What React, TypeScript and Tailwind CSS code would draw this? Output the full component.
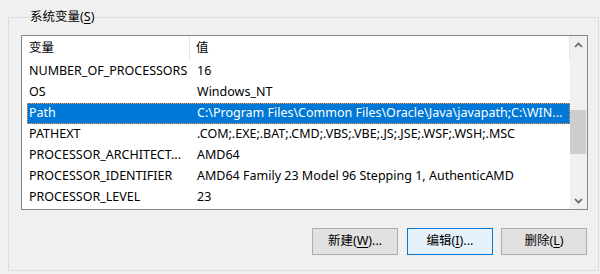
import React from 'react';

interface EnvVar {
  name: string;
  value: string;
}

// shown as the list view clips them
const vars: EnvVar[] = [
  { name: 'NUMBER_OF_PROCESSORS', value: '16' },
  { name: 'OS', value: 'Windows_NT' },
  { name: 'Path', value: 'C:\\Program Files\\Common Files\\Oracle\\Java\\javapath;C:\\WIN...' },
  { name: 'PATHEXT', value: '.COM;.EXE;.BAT;.CMD;.VBS;.VBE;.JS;.JSE;.WSF;.WSH;.MSC' },
  { name: 'PROCESSOR_ARCHITECT...', value: 'AMD64' },
  { name: 'PROCESSOR_IDENTIFIER', value: 'AMD64 Family 23 Model 96 Stepping 1, AuthenticAMD' },
  { name: 'PROCESSOR_LEVEL', value: '23' },
];

const selectedName = 'Path';

const Chevron: React.FC<{ up?: boolean }> = ({ up }) => (
  <svg width="9" height="6" viewBox="0 0 9 6" className="block">
    <path
      d={up ? 'M1 5 L4.5 1.5 L8 5' : 'M1 1 L4.5 4.5 L8 1'}
      fill="none"
      stroke="#606060"
      strokeWidth="1.6"
    />
  </svg>
);

const WinButton: React.FC<{ label: string; hotkey: string; dots?: boolean; focused?: boolean; className?: string }> = ({
  label,
  hotkey,
  dots,
  focused,
  className = '',
}) => (
  <button
    className={`w-[86px] h-[27px] flex items-center justify-center text-[12.5px] text-black border ${
      focused ? 'bg-[#e5f1fb] border-[#0078d7]' : 'bg-[#e1e1e1] border-[#adadad]'
    } ${className}`}
  >
    {label}(<span className="underline underline-offset-2">{hotkey}</span>){dots ? '...' : ''}
  </button>
);

export default function App() {
  return (
    <div
      className="w-[600px] h-[274px] bg-[#f0f0f0] overflow-hidden pt-[9px] text-black"
      style={{ fontFamily: '"Noto Sans", "Noto Sans CJK SC", sans-serif' }}
    >
      <fieldset className="ml-[8px] w-[591px] h-[262px] border border-[#dcdcdc] pl-[12px] pr-[10px]">
        <legend className="ml-[8px] px-[1px] text-[12.5px] leading-[16px]">
          系统变量(<span className="underline underline-offset-2">S</span>)
        </legend>

        {/* List view */}
        <div className="mt-[10px] h-[175px] border border-[#828790] bg-white flex text-[12.5px]">
          <div className="w-[548px] flex flex-col">
            {/* Header */}
            <div className="h-[25px] flex items-stretch shrink-0">
              <div className="w-[168px] pl-[7px] flex items-center border-r border-[#e5e5e5]">变量</div>
              <div className="flex-1 pl-[6px] flex items-center border-r border-[#e5e5e5]">值</div>
            </div>
            {/* Rows */}
            {vars.map((v) => {
              const sel = v.name === selectedName;
              return (
                <div
                  key={v.name}
                  className={`ml-[5px] h-[21px] flex items-center shrink-0 whitespace-nowrap ${
                    sel ? 'bg-[#0078d7] text-white outline outline-1 outline-dotted outline-[#ff9a2e] -outline-offset-1' : ''
                  }`}
                >
                  <div className="w-[163px] pl-[2px] shrink-0">{v.name}</div>
                  <div className="pl-[7px]">{v.value}</div>
                </div>
              );
            })}
          </div>
          {/* Scrollbar */}
          <div className="w-[17px] bg-[#f0f0f0] flex flex-col">
            <div className="h-[17px] flex items-center justify-center">
              <Chevron up />
            </div>
            <div className="flex-1">
              <div className="mt-[57px] h-[44px] mr-[1px] bg-[#cdcdcd]" />
            </div>
            <div className="h-[17px] flex items-center justify-center">
              <Chevron />
            </div>
          </div>
        </div>

        {/* Buttons */}
        <div className="mt-[18px] flex justify-end pr-[1px]">
          <WinButton label="新建" hotkey="W" dots />
          <WinButton label="编辑" hotkey="I" dots focused className="ml-[9px]" />
          <WinButton label="删除" hotkey="L" className="ml-[8px]" />
        </div>
      </fieldset>
    </div>
  );
}
